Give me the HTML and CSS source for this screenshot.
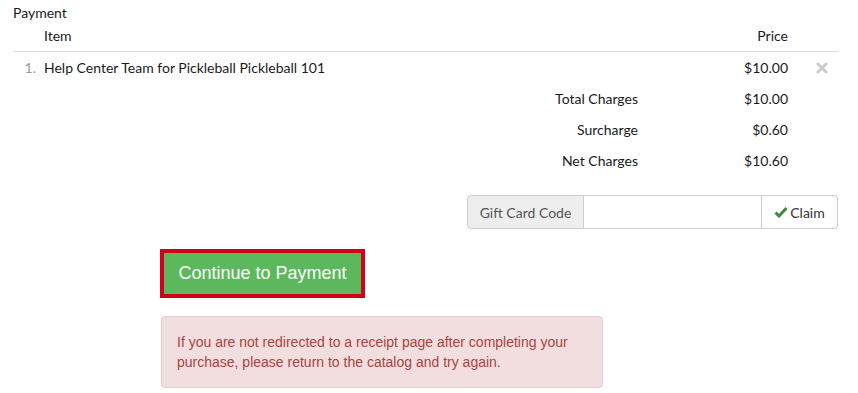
FILE: index.html
```html
<!DOCTYPE html>
<html>
<head>
<meta charset="utf-8">
<link rel="stylesheet" href="styles.css">
</head>
<body>
<div class="page">
  <div class="title">Payment</div>
  <div class="cart">
    <div class="row head">
      <div class="num"></div>
      <div class="item">Item</div>
      <div class="price">Price</div>
      <div class="act"></div>
    </div>
    <div class="row line">
      <div class="num">1.</div>
      <div class="item">Help Center Team for Pickleball Pickleball 101</div>
      <div class="price">$10.00</div>
      <div class="act">
        <svg class="remove" width="12" height="12" viewBox="0 0 12 12"><path d="M2 2 L10 10 M10 2 L2 10" stroke="#cccccc" stroke-width="3" stroke-linecap="round"/></svg>
      </div>
    </div>
    <div class="row sum">
      <div class="label">Total Charges</div>
      <div class="price">$10.00</div>
      <div class="act"></div>
    </div>
    <div class="row sum">
      <div class="label">Surcharge</div>
      <div class="price">$0.60</div>
      <div class="act"></div>
    </div>
    <div class="row sum">
      <div class="label">Net Charges</div>
      <div class="price">$10.60</div>
      <div class="act"></div>
    </div>
  </div>
  <div class="gift-wrap">
    <div class="gift">
      <span class="addon">Gift Card Code</span>
      <input class="code" type="text">
      <button class="claim"><svg width="14" height="12" viewBox="0 0 14 12"><path d="M1.5 6.5 L5 10 L12.5 2" fill="none" stroke="#3d8b3d" stroke-width="3"/></svg>Claim</button>
    </div>
  </div>
  <div class="actions">
    <button class="continue">Continue to Payment</button>
    <div class="alert">If you are not redirected to a receipt page after completing your purchase, please return to the catalog and try again.</div>
  </div>
</div>
</body>
</html>
```

FILE: styles.css
```css
* { box-sizing: border-box; }
body {
  margin: 0;
  background: #fff;
  font-family: Lato, "Liberation Sans", sans-serif;
  font-size: 14px;
  color: #1a1a1a;
}
.page {
  padding: 5px 20px 0 13px;
}
.title {
  height: 15px;
  line-height: 15px;
}
.cart {
  display: flex;
  flex-direction: column;
}
.row {
  display: flex;
  align-items: center;
  height: 31px;
}
.row.head {
  height: 32px;
  border-bottom: 1px solid #dddddd;
}
.num {
  width: 31px;
  padding-right: 8px;
  text-align: right;
  color: #999;
}
.item {
  flex: 1;
}
.label {
  flex: 1;
  text-align: right;
  padding-right: 30px;
}
.price {
  width: 120px;
  text-align: right;
}
.act {
  width: 50px;
  display: flex;
  justify-content: flex-end;
  padding-right: 10px;
}
.gift-wrap {
  display: flex;
  justify-content: flex-end;
  margin-top: 19px;
}
.gift {
  display: flex;
  width: 371px;
  height: 34px;
}
.addon {
  width: 117px;
  background: #eeeeee;
  border: 1px solid #cccccc;
  border-radius: 4px 0 0 4px;
  color: #555;
  font-size: 14px;
  display: flex;
  align-items: center;
  justify-content: center;
}
.code {
  width: 177px;
  border: 1px solid #cccccc;
  border-left: 0;
  border-right: 0;
  margin: 0;
  padding: 0 8px;
  outline: none;
}
.claim {
  width: 77px;
  border: 1px solid #cccccc;
  border-radius: 0 4px 4px 0;
  background: #fff;
  color: #333;
  font-family: Lato, sans-serif;
  font-size: 14px;
  display: flex;
  align-items: center;
  justify-content: center;
  gap: 2px;
  padding: 0;
  margin: 0;
}
.actions {
  padding-left: 151px;
  display: flex;
  flex-direction: column;
  align-items: flex-start;
  margin-top: 24px;
}
.continue {
  background: #5cb85c;
  color: #fff;
  border: 0;
  outline: 4px solid #d0021b;
  font-family: "Liberation Sans", Arial, sans-serif;
  font-size: 18px;
  height: 41px;
  width: 197px;
  padding: 0;
  margin: 0;
}
.alert {
  margin-top: 22px;
  margin-left: -3px;
  width: 442px;
  background: #f2dede;
  border: 1px solid #ebccd1;
  border-radius: 4px;
  color: #a94442;
  font-family: "Liberation Sans", Arial, sans-serif;
  font-size: 14px;
  line-height: 20px;
  padding: 15px;
}
```
